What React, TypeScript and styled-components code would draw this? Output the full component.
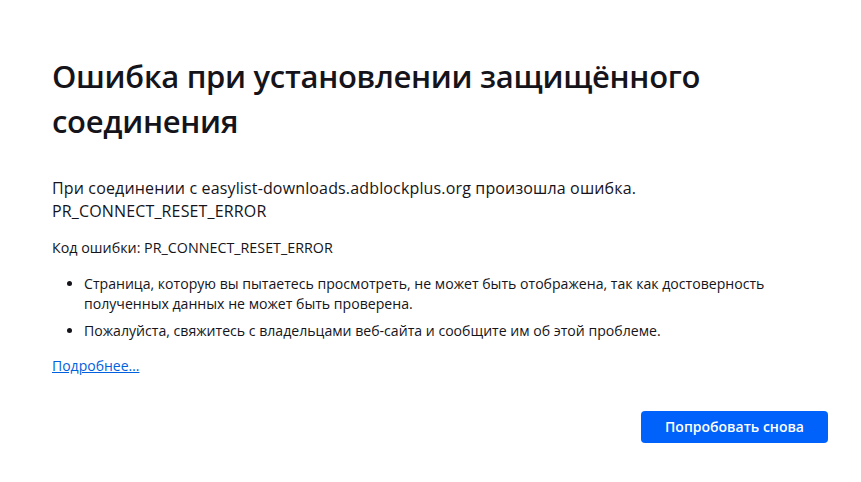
import styled, { createGlobalStyle } from 'styled-components';

const GlobalStyle = createGlobalStyle`
  html, body {
    margin: 0;
    padding: 0;
    background: #fff;
  }
  body {
    font-family: "Open Sans", "Noto Sans", sans-serif;
    color: #15141a;
  }
`;

const Page = styled.div`
  box-sizing: border-box;
  width: 861px;
  height: 482px;
  padding: 54px 33px 0 52px;
`;

const Container = styled.div`
  display: flex;
  flex-direction: column;
  width: 776px;
`;

const Title = styled.h1`
  margin: 0 0 33px;
  font-size: 31px;
  line-height: 45px;
  letter-spacing: -0.3px;
  font-weight: 600;
  color: #15141a;
`;

const Lead = styled.p`
  margin: 0 0 15px;
  font-size: 16px;
  line-height: 23px;
  letter-spacing: 0.15px;
`;

const Code = styled.p`
  margin: 0 0 16px;
  font-size: 14.3px;
  line-height: 20px;
`;

const List = styled.ul`
  margin: 0 0 7px;
  padding-left: 32px;
  font-size: 14.1px;
  line-height: 19.5px;
`;

const Item = styled.li`
  margin-bottom: 8px;
`;

const More = styled.a`
  font-size: 14px;
  line-height: 20px;
  color: #0061e0;
  text-decoration: underline;
  align-self: flex-start;
`;

const Actions = styled.div`
  display: flex;
  justify-content: flex-end;
  margin-top: 35px;
`;

const RetryButton = styled.button`
  height: 32px;
  padding: 0 24px;
  border: none;
  border-radius: 4px;
  background: #0062fa;
  color: #fff;
  font-family: inherit;
  font-size: 14px;
  font-weight: 600;
`;

export default function App() {
  return (
    <>
      <GlobalStyle />
      <Page>
        <Container>
          <Title>Ошибка при установлении защищённого соединения</Title>
          <Lead>
            При соединении с easylist-downloads.adblockplus.org произошла ошибка.
            <br />
            PR_CONNECT_RESET_ERROR
          </Lead>
          <Code>Код ошибки: PR_CONNECT_RESET_ERROR</Code>
          <List>
            <Item>
              Страница, которую вы пытаетесь просмотреть, не может быть отображена, так как
              достоверность полученных данных не может быть проверена.
            </Item>
            <Item>Пожалуйста, свяжитесь с владельцами веб-сайта и сообщите им об этой проблеме.</Item>
          </List>
          <More href="#">Подробнее…</More>
          <Actions>
            <RetryButton>Попробовать снова</RetryButton>
          </Actions>
        </Container>
      </Page>
    </>
  );
}
